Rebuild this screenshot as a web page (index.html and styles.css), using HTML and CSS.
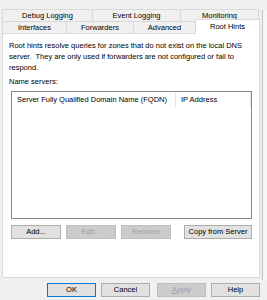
FILE: index.html
```html
<!DOCTYPE html>
<html>
<head>
<meta charset="utf-8">
<link rel="stylesheet" href="styles.css">
</head>
<body>
<div class="window">
<div class="dialog">
  <div class="tabs">
    <div class="tabrow row1">
      <div class="tab w-debug">Debug Logging</div>
      <div class="tab w-event">Event Logging</div>
      <div class="tab w-mon">Monitoring</div>
    </div>
    <div class="tabrow row2">
      <div class="tab w-if">Interfaces</div>
      <div class="tab w-fw">Forwarders</div>
      <div class="tab w-adv">Advanced</div>
      <div class="tab w-rh selected">Root Hints</div>
    </div>
  </div>
  <div class="panel">
    <p class="desc">Root hints resolve queries for zones that do not exist on the local DNS server.&nbsp; They are only used if forwarders are not configured or fail to respond.</p>
    <div class="label">Name servers:</div>
    <div class="list">
      <div class="list-head">
        <div class="col c1">Server Fully Qualified Domain Name (FQDN)</div>
        <div class="col c2">IP Address</div>
      </div>
    </div>
    <div class="btnrow">
      <div class="btn b-small">Add...</div>
      <div class="btn b-small disabled">Edit...</div>
      <div class="btn b-small disabled">Remove</div>
      <div class="spacer"></div>
      <div class="btn b-copy">Copy from Server</div>
    </div>
  </div>
  <div class="footer">
    <div class="btn b-foot">OK</div>
    <div class="btn b-foot">Cancel</div>
    <div class="btn b-foot disabled gap-l"><u>A</u>pply</div>
    <div class="btn b-foot">Help</div>
  </div>
</div>
<div class="edge"></div>
</div>
</body>
</html>
```

FILE: styles.css
```css
html, body {
  margin: 0;
  padding: 0;
  background: #f0f0f0;
  font-family: "Liberation Sans", Arial, sans-serif;
  font-size: 7.5px;
  color: #000;
}
.window {
  display: flex;
  width: 267px;
  height: 300px;
}
.dialog {
  width: 262px;
  height: 300px;
  box-sizing: border-box;
  padding: 9px 0 0 2px;
  display: flex;
  flex-direction: column;
}
.edge {
  flex: 1;
  margin: 10px 0 20px 0;
  border-left: 1px solid #c4c4c4;
  background: #f7f7f7;
}
.tabs {
  display: flex;
  flex-direction: column;
}
.tabrow {
  display: flex;
  height: 12px;
}
.tab {
  box-sizing: border-box;
  border: 1px solid #d9d9d9;
  border-bottom: none;
  margin-right: -1px;
  background: #f0f0f0;
  text-align: center;
  line-height: 11px;
  height: 13px;
}
.w-debug { width: 91px; }
.w-event { width: 89px; }
.w-mon { width: 79px; }
.w-if { width: 65px; }
.w-fw { width: 68px; }
.w-adv { width: 63px; }
.w-rh { width: 65px; }
.tab.selected {
  background: #fff;
  height: 15px;
  margin-top: -2px;
  position: relative;
  z-index: 2;
  line-height: 14px;
}
.panel {
  background: #fff;
  border: 1px solid #d9d9d9;
  height: 245px;
  box-sizing: border-box;
  padding: 6px 7px 0 6px;
  width: 258px;
  display: flex;
  flex-direction: column;
}
.desc {
  margin: 0;
  line-height: 11px;
  padding-right: 4px;
}
.label {
  margin-top: 3px;
  line-height: 11px;
}
.list {
  margin: 4px 0 0 2px;
  border: 1px solid #828790;
  height: 128px;
  box-sizing: border-box;
}
.list-head {
  display: flex;
  height: 15px;
  line-height: 15px;
}
.col {
  box-sizing: border-box;
  padding-left: 5px;
  border-right: 1px solid #e5e5e5;
  white-space: nowrap;
}
.c1 { width: 164px; }
.c2 { width: 75px; }
.btnrow {
  display: flex;
  margin: 6px 0 0 2px;
  gap: 5px;
}
.spacer { flex: 1; }
.btn {
  box-sizing: border-box;
  height: 14px;
  line-height: 12px;
  border: 1px solid #adadad;
  background: #e1e1e1;
  text-align: center;
}
.btn.disabled {
  color: #a0a0a0;
  background: #cccccc;
  border-color: #bfbfbf;
}
.b-small { width: 50px; }
.b-copy { width: 68px; }
.footer {
  display: flex;
  justify-content: flex-end;
  gap: 5px;
  margin-top: 5px;
  margin-right: 2px;
}
.footer .gap-l { margin-left: 2px; }
.b-foot { width: 49px; }
.footer .btn:first-child { border-color: #0078d7; }
```
